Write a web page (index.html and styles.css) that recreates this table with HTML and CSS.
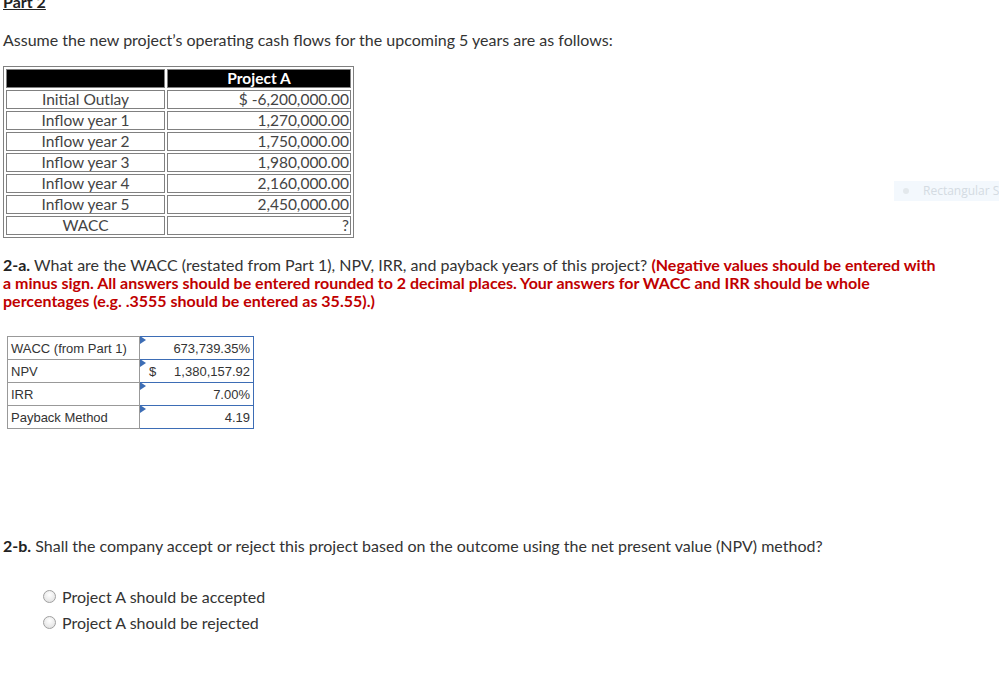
FILE: index.html
```html
<!DOCTYPE html>
<html>
<head>
<meta charset="utf-8">
<link rel="stylesheet" href="styles.css">
</head>
<body>
<div class="page">
  <div class="part-title">Part 2</div>
  <p class="intro">Assume the new project’s operating cash flows for the upcoming 5 years are as follows:</p>
  <table class="flows">
    <tr class="head"><th></th><th>Project A</th></tr>
    <tr><td class="lbl">Initial Outlay</td><td class="num">$ -6,200,000.00</td></tr>
    <tr><td class="lbl">Inflow year 1</td><td class="num">1,270,000.00</td></tr>
    <tr><td class="lbl">Inflow year 2</td><td class="num">1,750,000.00</td></tr>
    <tr><td class="lbl">Inflow year 3</td><td class="num">1,980,000.00</td></tr>
    <tr><td class="lbl">Inflow year 4</td><td class="num">2,160,000.00</td></tr>
    <tr><td class="lbl">Inflow year 5</td><td class="num">2,450,000.00</td></tr>
    <tr><td class="lbl">WACC</td><td class="num">?</td></tr>
  </table>
  <p class="question"><b>2-a.</b> What are the WACC (restated from Part 1), NPV, IRR, and payback years of this project? <span class="warn">(Negative values should be entered with a minus sign. All answers should be entered rounded to 2 decimal places. Your answers for WACC and IRR should be whole percentages (e.g. .3555 should be entered as 35.55).)</span></p>
  <table class="answers">
    <tr><td class="alabel">WACC (from Part 1)</td><td class="aval"><span class="flag"></span>673,739.35%</td></tr>
    <tr><td class="alabel">NPV</td><td class="aval money"><span class="flag"></span><span class="cur">$</span><span>1,380,157.92</span></td></tr>
    <tr><td class="alabel">IRR</td><td class="aval"><span class="flag"></span>7.00%</td></tr>
    <tr><td class="alabel">Payback Method</td><td class="aval"><span class="flag"></span>4.19</td></tr>
  </table>
  <p class="question q2"><b>2-b.</b> Shall the company accept or reject this project based on the outcome using the net present value (NPV) method?</p>
  <div class="choices">
    <label class="choice"><span class="radio"></span>Project A should be accepted</label>
    <label class="choice"><span class="radio"></span>Project A should be rejected</label>
  </div>
</div>
<div class="tag"><span class="dot"></span>Rectangular S</div>
</body>
</html>
```
FILE: styles.css
```css
html, body { margin: 0; padding: 0; background: #fff; }
body {
  font-family: "Lato", "Liberation Sans", sans-serif;
  color: #333;
  font-size: 16px;
  width: 999px;
  height: 687px;
  overflow: hidden;
  position: relative;
}
.page { padding: 0 0 0 3px; }
.part-title {
  font-weight: bold;
  text-decoration: underline;
  font-size: 16px;
  line-height: 16px;
  margin-top: -6px;
  color: #222;
}
.intro { margin: 21px 0 0 0; line-height: 18px; }
.flows {
  margin-top: 17px;
  border: 1px solid #808080;
  border-spacing: 2px;
  border-collapse: separate;
  width: 351px;
  font-size: 15.5px;
  color: #444;
}
.flows td, .flows th {
  border: 1px solid #808080;
  padding: 0 1px;
  height: 17px;
  line-height: 17px;
}
.flows .head th { background: #000; color: #fff; font-weight: bold; }
.flows .head th:first-child { width: 155px; }
.flows .lbl { text-align: center; }
.flows .num { text-align: right; }
.question { margin: 18px 0 0 0; line-height: 18px; font-size: 16px; width: 940px; }
.question b { color: #222; }
.warn { color: #c00000; font-weight: bold; }
.answers {
  margin: 26px 0 0 4px;
  border-collapse: collapse;
  font-family: "Liberation Sans", Arial, sans-serif;
  font-size: 13px;
  color: #333;
}
.answers td { height: 22px; padding: 0 3px; }
.alabel { border: 1px solid #999; width: 125px; }
.aval {
  border: 1px solid #3d6db5;
  width: 107px;
  text-align: right;
  position: relative;
}
.flag {
  position: absolute; left: 0; top: 0;
  width: 0; height: 0;
  border-top: 4px solid transparent;
  border-bottom: 4px solid transparent;
  border-left: 6px solid #3d6db5;
  transform: translateY(-1px);
}
.money .cur { float: left; padding-left: 6px; }
.q2 { margin-top: 108px; }
.choices { margin: 32px 0 0 40px; display: flex; flex-direction: column; gap: 7px; }
.choice { display: flex; align-items: center; gap: 6px; line-height: 19px; }
.radio {
  width: 11px; height: 11px; border-radius: 50%;
  border: 1px solid #a0a0a0;
  background: radial-gradient(circle at 50% 35%, #fff, #dcdcdc);
}
.tag {
  position: absolute; left: 894px; top: 181px;
  width: 110px; height: 20px;
  background: #f3f8fd;
  color: #d4dbe2;
  font-family: "Open Sans", sans-serif;
  font-size: 12px;
  line-height: 20px;
  display: flex; align-items: center; gap: 14px;
  padding-left: 9px;
  box-sizing: border-box;
}
.tag .dot { width: 6px; height: 6px; border-radius: 50%; background: #e3e8ec; }
```
